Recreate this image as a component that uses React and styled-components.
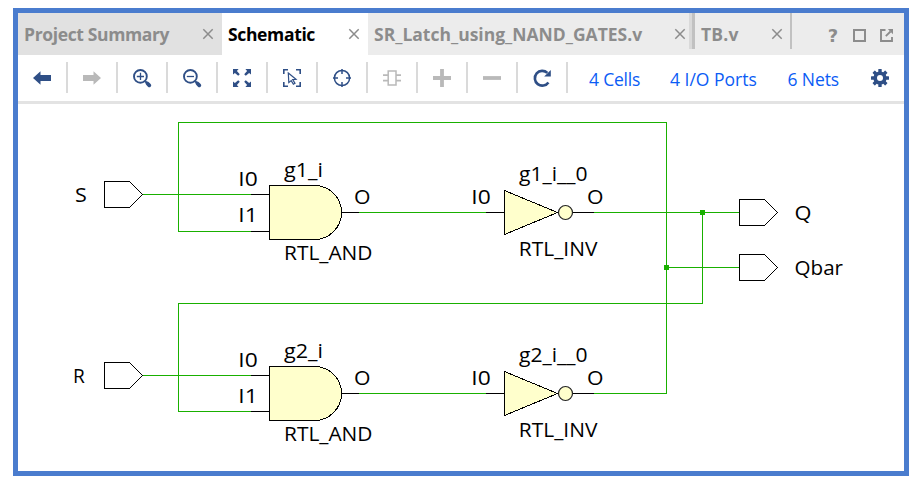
import React from "react";
import styled, { createGlobalStyle } from "styled-components";

const NAVY = "#2f4f86";
const MUTED = "#b9b9b9";
const GREY = "#8c8c8c";
const WIRE = "#19b000";
const CELL = "#ffffcc";

const GlobalStyle = createGlobalStyle`
  *, *::before, *::after { box-sizing: border-box; }
  body {
    margin: 0;
    background: #fff;
    font-family: "Open Sans", "Noto Sans", sans-serif;
  }
`;

const Page = styled.div`
  width: 911px;
  height: 479px;
  padding: 8px 2px 3px 13px;
  overflow: hidden;
`;

const Frame = styled.main`
  display: flex;
  flex-direction: column;
  width: 896px;
  height: 468px;
  border: 5px solid #4a7cce;
  background: #fff;
`;

const TabBar = styled.div`
  display: flex;
  height: 42px;
  flex: none;
  background: #ececec;
`;

const Tab = styled.div`
  display: flex;
  align-items: center;
  justify-content: space-between;
  width: ${(p) => p.$width}px;
  height: 100%;
  padding: 0 ${(p) => p.$end ?? 8}px 0 6px;
  background: ${(p) => p.$bg || "transparent"};
  color: ${(p) => (p.$active ? "#000" : GREY)};
`;

const TabLabel = styled.span`
  font-size: 17.5px;
  font-weight: 700;
  line-height: 24px;
  letter-spacing: ${(p) => p.$spacing || 0}px;
  white-space: nowrap;
`;

const TabDivider = styled.span`
  width: ${(p) => p.$width}px;
  height: 36px;
  flex: none;
  background: #c1c1c1;
  border-left: ${(p) => p.$edge || 0}px solid #d9d9d9;
`;

const WindowControls = styled.div`
  display: flex;
  align-items: center;
  gap: 14px;
  margin-left: auto;
  padding: 3px 11px 0 0;
`;

const HelpMark = styled.span`
  width: 12px;
  color: ${GREY};
  font-family: "DejaVu Sans", sans-serif;
  font-size: 18px;
  font-weight: 700;
  line-height: 22px;
  text-align: center;
`;

const Toolbar = styled.div`
  display: flex;
  align-items: flex-start;
  flex: none;
  height: 49px;
  padding-top: 7px;
  border-bottom: 3px solid #e3e3e3;
`;

const ToolButton = styled.div`
  display: flex;
  align-items: center;
  justify-content: center;
  width: 50px;
  height: 31px;
  border-right: 2px solid #dadada;
`;

const Links = styled.div`
  display: flex;
  flex: 1;
  height: 31px;
  align-items: center;
  padding: 3px 14px 0 21px;
`;

const Link = styled.a`
  width: ${(p) => p.$width}px;
  color: #0b5cf5;
  font-size: 17.5px;
  line-height: 24px;
  letter-spacing: ${(p) => p.$spacing || 0}px;
  white-space: nowrap;
`;

const SettingsButton = styled.div`
  display: flex;
  margin: -3px 0 0 auto;
`;

const Canvas = styled.svg`
  display: block;
  width: 886px;
  height: 367px;
  flex: none;
`;

const Label = styled.text`
  font-family: "Open Sans", "Noto Sans", sans-serif;
  font-size: 20.5px;
  fill: #000;
`;

const Close = () => (
  <svg width="12" height="12" viewBox="0 0 12 12">
    <path d="M1.3 1.3 10.7 10.7M10.7 1.3 1.3 10.7" stroke={GREY} strokeWidth="1.5" />
  </svg>
);

const Icon = ({ children }) => (
  <svg width="20" height="20" viewBox="0 0 20 20" fill="none">
    {children}
  </svg>
);

const arrow = "M1 10 8.5 3.2V7H19V13H8.5V16.8Z";

const ICONS = [
  <path d={arrow} fill={NAVY} />,
  <path d={arrow} fill={MUTED} transform="translate(20 0) scale(-1 1)" />,
  <g stroke={NAVY}>
    <circle cx="8.4" cy="8.4" r="6.4" strokeWidth="1.9" />
    <path d="M4.8 8.5H12M8.5 4.8V12" strokeWidth="1.3" />
    <path d="m13.2 13.2 1.8 1.8" strokeWidth="2" />
    <path d="m15.5 15.5 1.8 1.8" strokeWidth="3.8" strokeLinecap="round" />
  </g>,
  <g stroke={NAVY}>
    <circle cx="8.4" cy="8.4" r="6.4" strokeWidth="1.9" />
    <path d="M4.8 8.5H12" strokeWidth="1.3" />
    <path d="m13.2 13.2 1.8 1.8" strokeWidth="2" />
    <path d="m15.5 15.5 1.8 1.8" strokeWidth="3.8" strokeLinecap="round" />
  </g>,
  <g fill={NAVY}>
    {[0, 90, 180, 270].map((a) => (
      <path key={a} transform={`rotate(${a} 10 10)`} d="M1 1H6.6L4.9 2.9 7.8 6.2 6.2 7.8 2.9 4.9 1 6.6Z" />
    ))}
  </g>,
  <g stroke={NAVY}>
    <path d="M1.8 6V1.8H6M14 1.8H18.2V6M18.2 14V18.2H14M6 18.2H1.8V14" strokeWidth="1.6" />
    <path d="M6.3 5 14 11.3 10.7 11.6 13 15.4 11.4 16.3 9.2 12.6 6.8 14.6Z" strokeWidth="1.2" />
  </g>,
  <g stroke={NAVY}>
    <circle cx="10" cy="10" r="7.6" strokeWidth="1.5" />
    <path d="M10 1V6M10 14V19M1 10H6M14 10H19" strokeWidth="1.5" />
  </g>,
  <g stroke={MUTED} strokeWidth="1.5">
    <rect x="6.2" y="3" width="7.8" height="14" />
    <path d="M1 7.2H6M1 12.6H6M14 7.2H19M14 12.6H19" strokeWidth="1.8" />
  </g>,
  <path d="M10 1V19M1 10H19" stroke={MUTED} strokeWidth="3.8" />,
  <path d="M1 10H19" stroke={MUTED} strokeWidth="3.8" />,
  <g>
    <path d="M16.4 14.4A7.4 7.4 0 1 1 15.4 4.9" stroke={NAVY} strokeWidth="2.6" />
    <path d="M18.8 2V8.5H12.2Z" fill={NAVY} />
  </g>,
];

const Gear = () => (
  <svg width="20" height="20" viewBox="0 0 20 20">
    <g fill={NAVY}>
      {[0, 45, 90, 135].map((a) => (
        <rect key={a} x="8.3" y="1" width="3.4" height="18" rx="0.5" transform={`rotate(${a} 10 10)`} />
      ))}
      <circle cx="10" cy="10" r="6.6" />
    </g>
    <circle cx="10" cy="10" r="3" fill="#fff" />
  </svg>
);

const Port = ({ x, y }) => (
  <path d={`M${x} ${y - 13}H${x + 25}L${x + 38} ${y}L${x + 25} ${y + 13}H${x}Z`} fill="#fff" stroke="#000" />
);

const T = ({ x, y, w, children }) => (
  <Label x={x} y={y} textLength={w} lengthAdjust="spacingAndGlyphs">
    {children}
  </Label>
);

/* One AND gate feeding one inverter; `id` names the cells and `dy` shifts the row. */
const GateRow = ({ id, dy, input, inputX }) => (
  <g transform={`translate(0 ${dy})`}>
    <g shapeRendering="crispEdges" strokeWidth="1">
      <Port x={104.5} y={194.5} />
      <path d="M251 194.5H269M342 212.5H359M486 212.5H504M573 212.5H594" stroke="#000" />
      <path d={`M251 ${dy ? 230.5 : 231.5}H269`} stroke="#000" />
      <path d="M269.5 185.5H314.5A27 27 0 0 1 314.5 239.5H269.5Z" fill={CELL} stroke="#000" />
      <path d="M504.5 190.5 557.5 212.5 504.5 234.5Z" fill={CELL} stroke="#000" />
    </g>
    <circle cx="565.5" cy="212.5" r="7" fill={CELL} stroke="#222" strokeWidth="1.2" />
    <T x={inputX} y={202} w={11.8}>{input}</T>
    <T x={238.3} y={186} w={19.4}>I0</T>
    <T x={238.3} y={222} w={19.4}>I1</T>
    <T x={284} y={177} w={39}>{`${id}_i`}</T>
    <T x={354} y={204} w={16.5}>O</T>
    <T x={284} y={260} w={88.5}>RTL_AND</T>
    <T x={471.3} y={204} w={19.4}>I0</T>
    <T x={519} y={181} w={68.5}>{`${id}_i__0`}</T>
    <T x={587} y={204} w={16.5}>O</T>
    <T x={518.8} y={256} w={78.6}>RTL_INV</T>
  </g>
);

const Schematic = () => (
  <Canvas viewBox="18 104 886 367">
    <g shapeRendering="crispEdges" fill="none" stroke={WIRE}>
      <path d="M143 194.5H251M251 231.5H178.5V122.5H666.5V393.5H594" />
      <path d="M359 212.5H486M594 212.5H739M702.5 212.5V303.5H178.5V411.5H251" />
      <path d="M143 375.5H251M359 393.5H486M666.5 267.5H739" />
      <path d="M700 210h5v5h-5zM664 265h5v5h-5z" fill={WIRE} stroke="none" />
    </g>
    <GateRow id="g1" dy={0} input="S" inputX={75} />
    <GateRow id="g2" dy={181} input="R" inputX={73} />
    <g shapeRendering="crispEdges">
      <Port x={739.5} y={212.5} />
      <Port x={739.5} y={267.5} />
    </g>
    <T x={794.5} y={220} w={17}>Q</T>
    <T x={794.5} y={275} w={48.5}>Qbar</T>
  </Canvas>
);

export default function App() {
  return (
    <Page>
      <GlobalStyle />
      <Frame>
        <TabBar>
          <Tab $width={204} $bg="#e1e1e1">
            <TabLabel $spacing={-0.36}>Project Summary</TabLabel>
            <Close />
          </Tab>
          <Tab $width={146} $bg="#fff" $active>
            <TabLabel $spacing={-0.35}>Schematic</TabLabel>
            <Close />
          </Tab>
          <Tab $width={321} $end={3}>
            <TabLabel>SR_Latch_using_NAND_GATES.v</TabLabel>
            <Close />
          </Tab>
          <TabDivider $width={6} $edge={3} />
          <Tab $width={95} $end={7}>
            <TabLabel $spacing={0.2}>TB.v</TabLabel>
            <Close />
          </Tab>
          <TabDivider $width={2} />
          <WindowControls>
            <HelpMark>?</HelpMark>
            <svg width="13" height="13" viewBox="0 0 13 13">
              <rect x="1" y="1" width="11" height="11" fill="none" stroke={GREY} strokeWidth="2" />
            </svg>
            <svg width="13" height="13" viewBox="0 0 13 13" fill="none" stroke={GREY}>
              <path d="M5.5 1H1V12H12V8" strokeWidth="1.9" />
              <path d="M5.8 7.2 10.5 2.5" strokeWidth="1.8" />
              <path d="M7.8 0H13V5.2Z" fill={GREY} stroke="none" />
            </svg>
          </WindowControls>
        </TabBar>
        <Toolbar>
          {ICONS.map((icon, i) => (
            <ToolButton key={i}>
              <Icon>{icon}</Icon>
            </ToolButton>
          ))}
          <Links>
            <Link $width={81} $spacing={-0.2}>4 Cells</Link>
            <Link $width={117.5}>4 I/O Ports</Link>
            <Link $width={60} $spacing={-0.1}>6 Nets</Link>
            <SettingsButton>
              <Gear />
            </SettingsButton>
          </Links>
        </Toolbar>
        <Schematic />
      </Frame>
    </Page>
  );
}
